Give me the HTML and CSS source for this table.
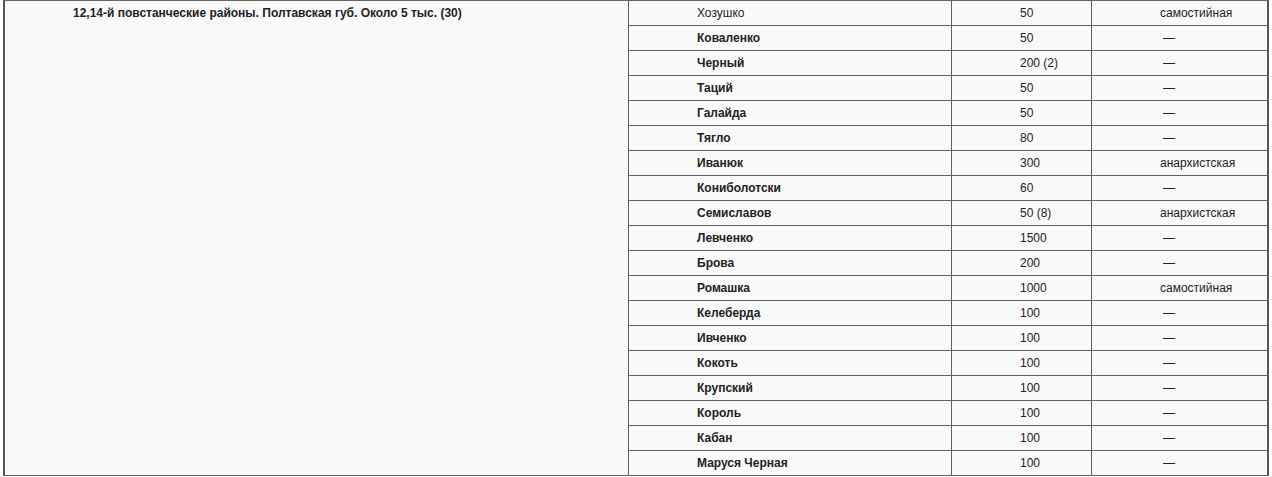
FILE: index.html
```html
<!DOCTYPE html>
<html lang="ru">
<head>
<meta charset="utf-8">
<title>Повстанческие районы</title>
<link rel="stylesheet" href="styles.css">
</head>
<body>
<div class="table">
  <div class="cell region">12,14-й повстанческие районы. Полтавская губ. Около 5 тыс. (30)</div>
  <div class="cell">Хозушко</div><div class="cell">50</div><div class="cell last">самостийная</div>
  <div class="cell b">Коваленко</div><div class="cell">50</div><div class="cell last dash">—</div>
  <div class="cell b">Черный</div><div class="cell">200 (2)</div><div class="cell last dash">—</div>
  <div class="cell b">Таций</div><div class="cell">50</div><div class="cell last dash">—</div>
  <div class="cell b">Галайда</div><div class="cell">50</div><div class="cell last dash">—</div>
  <div class="cell b">Тягло</div><div class="cell">80</div><div class="cell last dash">—</div>
  <div class="cell b">Иванюк</div><div class="cell">300</div><div class="cell last">анархистская</div>
  <div class="cell b">Кониболотски</div><div class="cell">60</div><div class="cell last dash">—</div>
  <div class="cell b">Семиславов</div><div class="cell">50 (8)</div><div class="cell last">анархистская</div>
  <div class="cell b">Левченко</div><div class="cell">1500</div><div class="cell last dash">—</div>
  <div class="cell b">Брова</div><div class="cell">200</div><div class="cell last dash">—</div>
  <div class="cell b">Ромашка</div><div class="cell">1000</div><div class="cell last">самостийная</div>
  <div class="cell b">Келеберда</div><div class="cell">100</div><div class="cell last dash">—</div>
  <div class="cell b">Ивченко</div><div class="cell">100</div><div class="cell last dash">—</div>
  <div class="cell b">Кокоть</div><div class="cell">100</div><div class="cell last dash">—</div>
  <div class="cell b">Крупский</div><div class="cell">100</div><div class="cell last dash">—</div>
  <div class="cell b">Король</div><div class="cell">100</div><div class="cell last dash">—</div>
  <div class="cell b">Кабан</div><div class="cell">100</div><div class="cell last dash">—</div>
  <div class="cell b">Маруся Черная</div><div class="cell">100</div><div class="cell last dash">—</div>
</div>
</body>
</html>
```
FILE: styles.css
```css
html, body {
  margin: 0;
  padding: 0;
  background: #ffffff;
}
.table {
  margin-left: 3px;
  width: 1266px;
  box-sizing: border-box;
  display: grid;
  grid-template-columns: 624px 323px 140px 175px;
  grid-auto-rows: 25px;
  background: #f9f9f9;
  border-left: 2px solid #555;
  border-right: 2px solid #555;
  border-top: 1px solid #666;
  font-family: "Liberation Sans", Arial, sans-serif;
  font-size: 12px;
  color: #222;
}
.cell {
  box-sizing: border-box;
  border-bottom: 1px solid #5f5f5f;
  border-right: 1px solid #5f5f5f;
  padding-left: 68px;
  line-height: 24px;
  white-space: nowrap;
}
.cell.last {
  border-right: none;
}
.cell.dash {
  padding-left: 71px;
}
.region {
  grid-row: span 19;
  font-weight: bold;
}
.b {
  font-weight: bold;
}
```
